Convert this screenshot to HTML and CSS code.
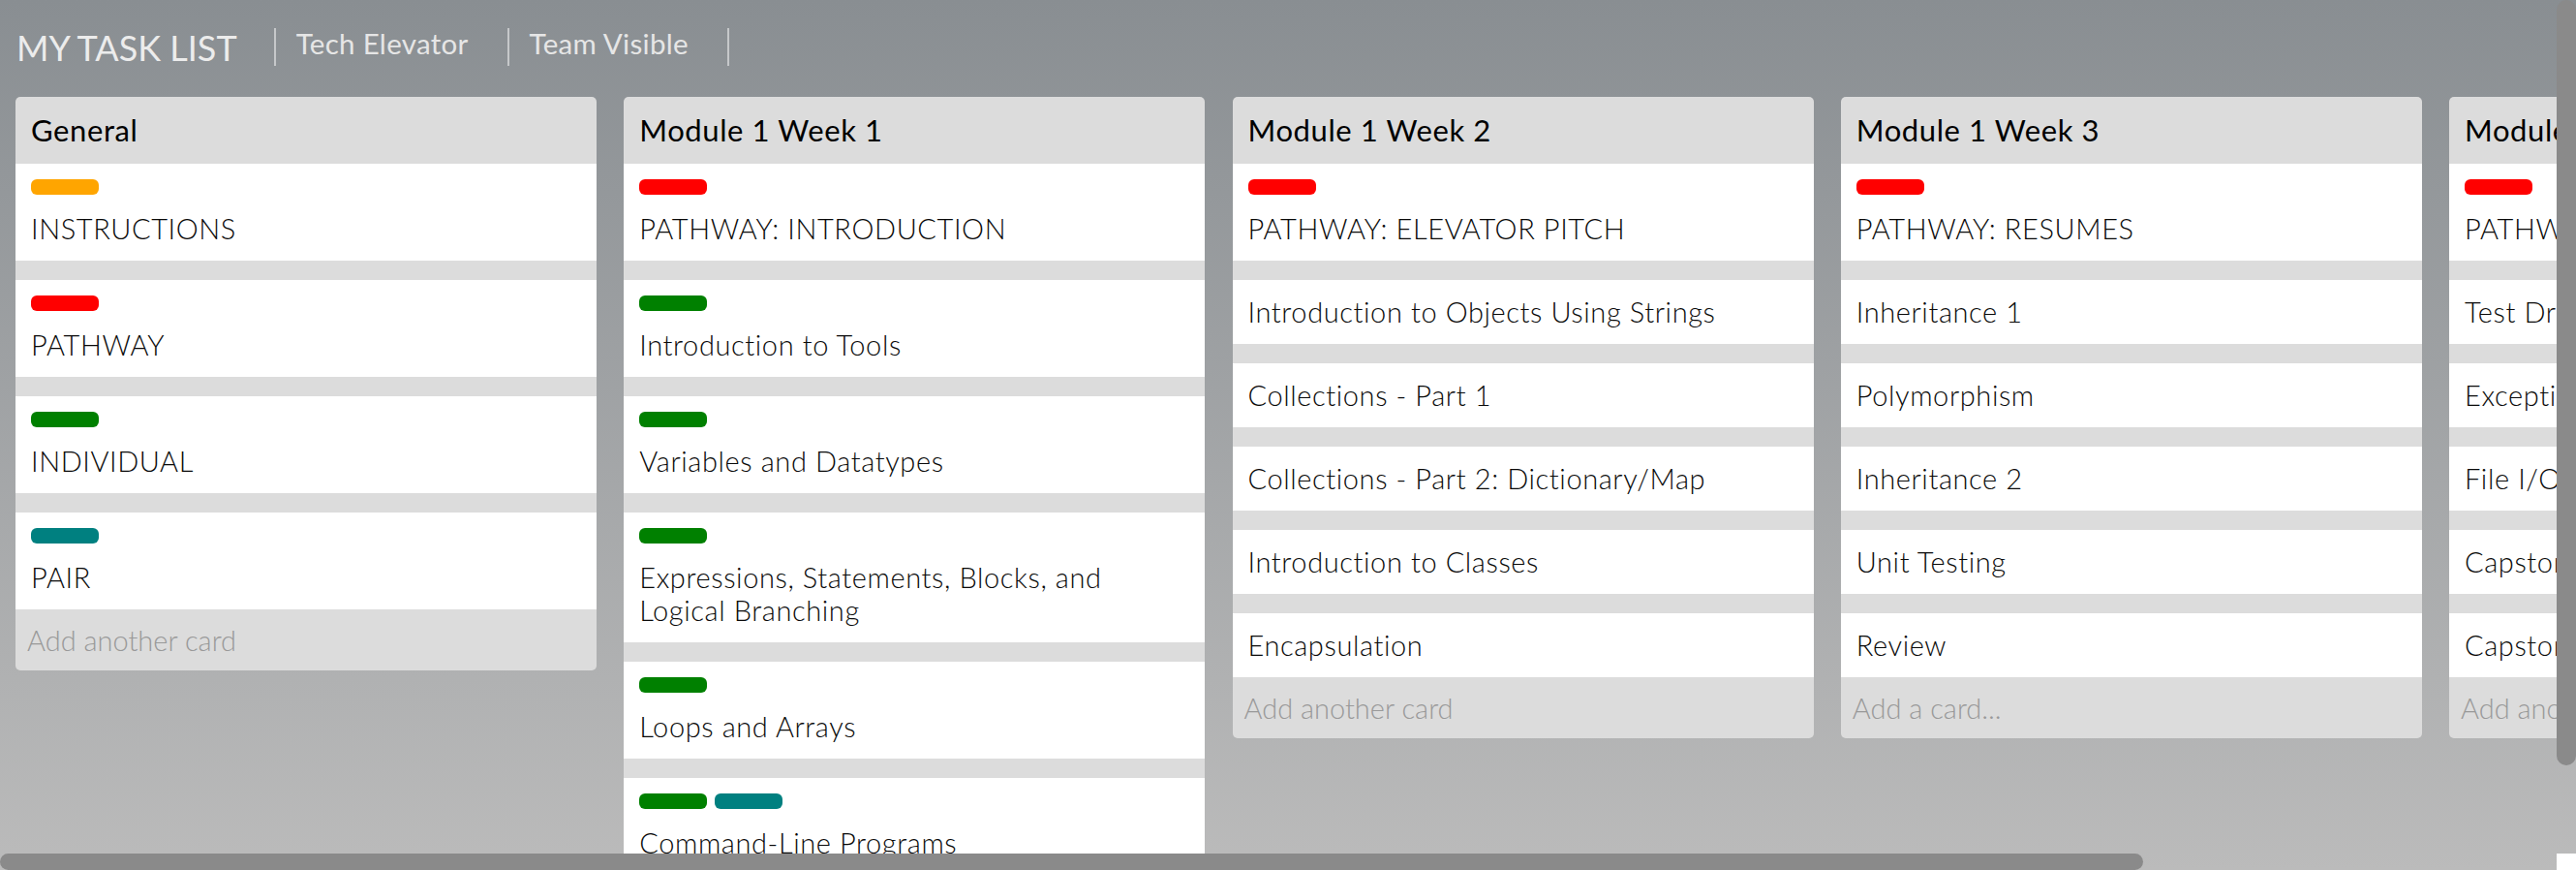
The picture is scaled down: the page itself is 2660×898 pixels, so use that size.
FILE: index.html
```html
<!DOCTYPE html>
<html lang="en">
<head>
<meta charset="utf-8">
<title>My Task List</title>
<link rel="stylesheet" href="styles.css">
</head>
<body>
<div class="app">
  <header class="topbar">
    <h1 class="brand">MY TASK LIST</h1>
    <nav class="nav">
      <a class="nav-link" href="#">Tech Elevator</a>
      <a class="nav-link" href="#">Team Visible</a>
    </nav>
  </header>

  <main class="board">
    <section class="list">
      <h2 class="list-title">General</h2>
      <div class="cards">
        <div class="card"><div class="labels"><span class="label orange"></span></div><p class="card-text">INSTRUCTIONS</p></div>
        <div class="card"><div class="labels"><span class="label red"></span></div><p class="card-text">PATHWAY</p></div>
        <div class="card"><div class="labels"><span class="label green"></span></div><p class="card-text">INDIVIDUAL</p></div>
        <div class="card"><div class="labels"><span class="label teal"></span></div><p class="card-text">PAIR</p></div>
      </div>
      <div class="add-card">Add another card</div>
    </section>

    <section class="list">
      <h2 class="list-title">Module 1 Week 1</h2>
      <div class="cards">
        <div class="card"><div class="labels"><span class="label red"></span></div><p class="card-text">PATHWAY: INTRODUCTION</p></div>
        <div class="card"><div class="labels"><span class="label green"></span></div><p class="card-text">Introduction to Tools</p></div>
        <div class="card"><div class="labels"><span class="label green"></span></div><p class="card-text">Variables and Datatypes</p></div>
        <div class="card"><div class="labels"><span class="label green"></span></div><p class="card-text">Expressions, Statements, Blocks, and<br>Logical Branching</p></div>
        <div class="card"><div class="labels"><span class="label green"></span></div><p class="card-text">Loops and Arrays</p></div>
        <div class="card"><div class="labels"><span class="label green"></span><span class="label teal"></span></div><p class="card-text">Command-Line Programs</p></div>
      </div>
      <div class="add-card">Add another card</div>
    </section>

    <section class="list">
      <h2 class="list-title">Module 1 Week 2</h2>
      <div class="cards">
        <div class="card"><div class="labels"><span class="label red"></span></div><p class="card-text">PATHWAY: ELEVATOR PITCH</p></div>
        <div class="card"><p class="card-text">Introduction to Objects Using Strings</p></div>
        <div class="card"><p class="card-text">Collections - Part 1</p></div>
        <div class="card"><p class="card-text">Collections - Part 2: Dictionary/Map</p></div>
        <div class="card"><p class="card-text">Introduction to Classes</p></div>
        <div class="card"><p class="card-text">Encapsulation</p></div>
      </div>
      <div class="add-card">Add another card</div>
    </section>

    <section class="list">
      <h2 class="list-title">Module 1 Week 3</h2>
      <div class="cards">
        <div class="card"><div class="labels"><span class="label red"></span></div><p class="card-text">PATHWAY: RESUMES</p></div>
        <div class="card"><p class="card-text">Inheritance 1</p></div>
        <div class="card"><p class="card-text">Polymorphism</p></div>
        <div class="card"><p class="card-text">Inheritance 2</p></div>
        <div class="card"><p class="card-text">Unit Testing</p></div>
        <div class="card"><p class="card-text">Review</p></div>
      </div>
      <div class="add-card">Add a card...</div>
    </section>

    <section class="list">
      <h2 class="list-title">Module 1 Week 4</h2>
      <div class="cards">
        <div class="card"><div class="labels"><span class="label red"></span></div><p class="card-text">PATHWAY: LINKEDIN</p></div>
        <div class="card"><p class="card-text">Test Driven Development</p></div>
        <div class="card"><p class="card-text">Exception Handling</p></div>
        <div class="card"><p class="card-text">File I/O</p></div>
        <div class="card"><p class="card-text">Capstone Planning</p></div>
        <div class="card"><p class="card-text">Capstone Review</p></div>
      </div>
      <div class="add-card">Add another card</div>
    </section>
  </main>
</div>

<div class="vscroll"><div class="vthumb"></div></div>
<div class="hscroll"><div class="hthumb"></div></div>
<div class="scroll-corner"></div>
</body>
</html>
```

FILE: styles.css
```css
* { box-sizing: border-box; }

html, body {
  margin: 0;
  padding: 0;
}

body {
  width: 2660px;
  height: 898px;
  overflow: hidden;
  position: relative;
  font-family: "Lato", "Open Sans", sans-serif;
  background: linear-gradient(to bottom, #898e92 0%, #bbbbbb 100%);
}

.app {
  width: 2640px;
  height: 881px;
  overflow: hidden;
}

/* ---------- top bar ---------- */
.topbar {
  display: flex;
  align-items: flex-start;
  height: 100px;
  padding-left: 17px;
}

.brand {
  margin: 29px 38px 0 0;
  font-size: 36px;
  line-height: 40px;
  font-weight: 400;
  color: #ececec;
  white-space: nowrap;
}

.nav {
  display: flex;
  margin-top: 29px;
  height: 39px;
  border-right: 2px solid #c6c8ca;
}

.nav-link {
  display: block;
  height: 39px;
  padding: 0 40px 0 21px;
  border-left: 2px solid #c6c8ca;
  font-size: 29.5px;
  line-height: 32px;
  letter-spacing: 0.3px;
  color: #e6e6e6;
  text-decoration: none;
  white-space: nowrap;
}

/* ---------- board ---------- */
.board {
  display: flex;
  align-items: flex-start;
  gap: 28.25px;
  padding-left: 16px;
}

.list {
  flex: 0 0 600px;
  background: #dcdcdc;
  border-radius: 5px;
  overflow: hidden;
}

.list-title {
  margin: 0;
  padding: 16px 16px;
  font-size: 31px;
  line-height: 37px;
  font-weight: 400;
  letter-spacing: 0.6px;
  color: #000;
  white-space: nowrap;
}

.cards {
  display: flex;
  flex-direction: column;
  gap: 20px;
}

.card {
  background: #fff;
  padding: 16px 16px 16px 16px;
}

.labels {
  display: flex;
  gap: 8px;
  margin-bottom: 18px;
}

.label {
  width: 70px;
  height: 16px;
  border-radius: 6px;
}

.label.orange { background: #ffa500; }
.label.red { background: #ff0000; }
.label.green { background: #008000; }
.label.teal { background: #008080; }

.card-text {
  margin: 0;
  font-size: 29px;
  line-height: 34px;
  font-weight: 300;
  letter-spacing: 0.6px;
  color: #0a0a0a;
  white-space: nowrap;
}

.add-card {
  padding: 15px 12px 14px 12px;
  font-size: 29px;
  line-height: 34px;
  font-weight: 300;
  color: #999;
  white-space: nowrap;
}

/* ---------- scrollbars (overlay) ---------- */
.vscroll {
  position: absolute;
  top: 0;
  right: 0;
  width: 20px;
  height: 881px;
}

.vthumb {
  width: 20px;
  height: 790px;
  border-radius: 10px;
  background: #8a8a8a;
}

.hscroll {
  position: absolute;
  left: 0;
  bottom: 0;
  width: 2640px;
  height: 17px;
}

.hthumb {
  width: 2213px;
  height: 17px;
  border-radius: 8.5px;
  background: #8a8a8a;
}

.scroll-corner {
  position: absolute;
  right: 0;
  bottom: 0;
  width: 20px;
  height: 17px;
  background: #fff;
}
```
